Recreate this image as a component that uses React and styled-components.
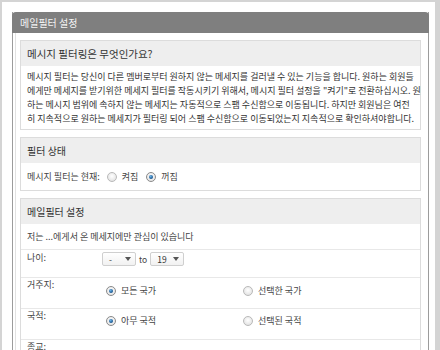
import React from "react";
import styled, { createGlobalStyle } from "styled-components";

const GlobalStyle = createGlobalStyle`
  html, body {
    margin: 0;
    padding: 0;
    height: 350px;
    overflow: hidden;
    background: #d4d4d4;
  }
  body {
    font-family: "Noto Sans CJK KR", "Noto Sans", "Liberation Sans", sans-serif;
    color: #444;
  }
`;

const Frame = styled.div`
  margin: 2px 5px 0 2px;
  padding: 10px 6px 0 10px;
  background: #fff;
  height: 360px;
`;

const Panel = styled.div`
  border-left: 1px solid #9c9c9c;
  border-right: 1px solid #9c9c9c;
  box-shadow: inset 2px 0 0 #fff, inset 3px 0 0 #e2e2e2;
  height: 400px;
`;

const PanelHead = styled.div`
  height: 21px;
  margin: 0 -1px;
  padding-left: 8px;
  background: #7f7f7f;
  border-radius: 4px 4px 0 0;
  color: #f4f4f4;
  font-size: 10px;
  line-height: 21px;
`;

const PanelBody = styled.div`
  padding: 7px 7px 0 7px;
`;

const Section = styled.div`
  border: 1px solid #dcdcdc;
  margin-bottom: 7px;
`;

const SectionHead = styled.div`
  height: 25px;
  padding-left: 6px;
  background: #eeeeee;
  color: #333;
  font-size: ${(p) => (p.$big ? "10.5px" : "10px")};
  line-height: 25px;
`;

const Para = styled.div`
  padding: 4px 6px 3px;
  font-size: 9px;
  line-height: 14px;
  color: #333;
  white-space: nowrap;
`;

const InlineRow = styled.div`
  display: flex;
  align-items: center;
  height: 27px;
  padding: 0 6px;
  font-size: 9px;
  color: #444;
`;

const Intro = styled.div`
  height: 25px;
  padding: 0 6px;
  font-size: 9px;
  line-height: 25px;
  color: #444;
  border-bottom: 1px solid #e8e8e8;
`;

const Row = styled.div`
  display: grid;
  grid-template-columns: 75px 1fr;
  align-items: start;
  height: ${(p) => p.$h}px;
  padding: 0 6px;
  border-bottom: 1px solid #e8e8e8;
  font-size: 9px;
  color: #444;
`;

const Label = styled.div`
  padding-top: ${(p) => p.$top}px;
  line-height: 12px;
`;

const Controls = styled.div`
  display: grid;
  grid-template-columns: ${(p) => (p.$split ? "137px 137px" : "auto")};
  justify-content: start;
  padding-top: ${(p) => p.$top}px;
  padding-left: ${(p) => p.$left || 0}px;
`;

const Option = styled.label`
  display: inline-flex;
  align-items: center;
  gap: ${(p) => p.$gap || 5}px;
  margin-right: ${(p) => p.$mr || 0}px;
  line-height: 14px;
`;

const Radio = styled.span`
  position: relative;
  width: 8px;
  height: 8px;
  border-radius: 50%;
  border: 1px solid ${(p) => (p.$on ? "#8a8a8a" : "#b9b9b9")};
  background: radial-gradient(circle at 50% 40%, #ffffff 0%, #e6e6e6 70%, #d4d4d4 100%);
  flex: none;
  &::after {
    content: "";
    display: ${(p) => (p.$on ? "block" : "none")};
    position: absolute;
    left: 2px;
    top: 2px;
    width: 4px;
    height: 4px;
    border-radius: 50%;
    background: radial-gradient(circle at 40% 35%, #6fb4e8 0%, #1e5f99 60%, #123f6b 100%);
  }
`;

const Select = styled.span`
  display: inline-flex;
  align-items: center;
  justify-content: space-between;
  box-sizing: border-box;
  width: 34px;
  height: 14px;
  padding: 0 4px 0 6px;
  border: 1px solid #cfcfcf;
  border-radius: 2px;
  background: linear-gradient(#ffffff, #f1f1f1);
  font-size: 8.5px;
  color: #333;
`;

const Arrow = styled.span`
  width: 0;
  height: 0;
  border-left: 3px solid transparent;
  border-right: 3px solid transparent;
  border-top: 4px solid #555;
`;

const To = styled.span`
  margin: 0 3px;
  font-size: 8.5px;
  line-height: 14px;
  color: #444;
`;

const AgeBox = styled.div`
  display: flex;
  align-items: center;
`;

const lines = [
  "메시지 필터는 당신이 다른 멤버로부터 원하지 않는 메세지를 걸러낼 수 있는 기능을 합니다. 원하는 회원들",
  "에게만 메세지를 받기위한 메세지 필터를 작동시키기 위해서, 메시지 필터 설정을 \"켜기\"로 전환하십시오. 원",
  "하는 메시지 범위에 속하지 않는 메세지는 자동적으로 스팸 수신함으로 이동됩니다. 하지만 회원님은 여전",
  "히 지속적으로 원하는 메세지가 필터링 되어 스팸 수신함으로 이동되었는지 지속적으로 확인하셔야합니다.",
];

export default function App() {
  return (
    <>
      <GlobalStyle />
      <Frame>
        <Panel>
          <PanelHead>메일필터 설정</PanelHead>
          <PanelBody>
            <Section>
              <SectionHead $big>메시지 필터링은 무엇인가요?</SectionHead>
              <Para>
                {lines.map((l) => (
                  <div key={l}>{l}</div>
                ))}
              </Para>
            </Section>

            <Section>
              <SectionHead>필터 상태</SectionHead>
              <InlineRow>
                <span style={{ marginRight: 7 }}>메시지 필터는 현재:</span>
                <Option $gap={5} $mr={8}>
                  <Radio />
                  켜짐
                </Option>
                <Option $gap={5}>
                  <Radio $on />
                  꺼짐
                </Option>
              </InlineRow>
            </Section>

            <Section>
              <SectionHead>메일필터 설정</SectionHead>
              <Intro>저는 ...에게서 온 메세지에만 관심이 있습니다</Intro>
              <Row $h={27}>
                <Label $top={2}>나이:</Label>
                <Controls $top={2}>
                  <AgeBox>
                    <Select>
                      -<Arrow />
                    </Select>
                    <To>to</To>
                    <Select>
                      19<Arrow />
                    </Select>
                  </AgeBox>
                </Controls>
              </Row>
              <Row $h={30}>
                <Label $top={1}>거주지:</Label>
                <Controls $split $top={6} $left={4}>
                  <Option>
                    <Radio $on />
                    모든 국가
                  </Option>
                  <Option>
                    <Radio />
                    선택한 국가
                  </Option>
                </Controls>
              </Row>
              <Row $h={30}>
                <Label $top={1}>국적:</Label>
                <Controls $split $top={5} $left={4}>
                  <Option>
                    <Radio $on />
                    아무 국적
                  </Option>
                  <Option>
                    <Radio />
                    선택된 국적
                  </Option>
                </Controls>
              </Row>
              <Row $h={30}>
                <Label $top={1}>종교:</Label>
              </Row>
            </Section>
          </PanelBody>
        </Panel>
      </Frame>
    </>
  );
}
